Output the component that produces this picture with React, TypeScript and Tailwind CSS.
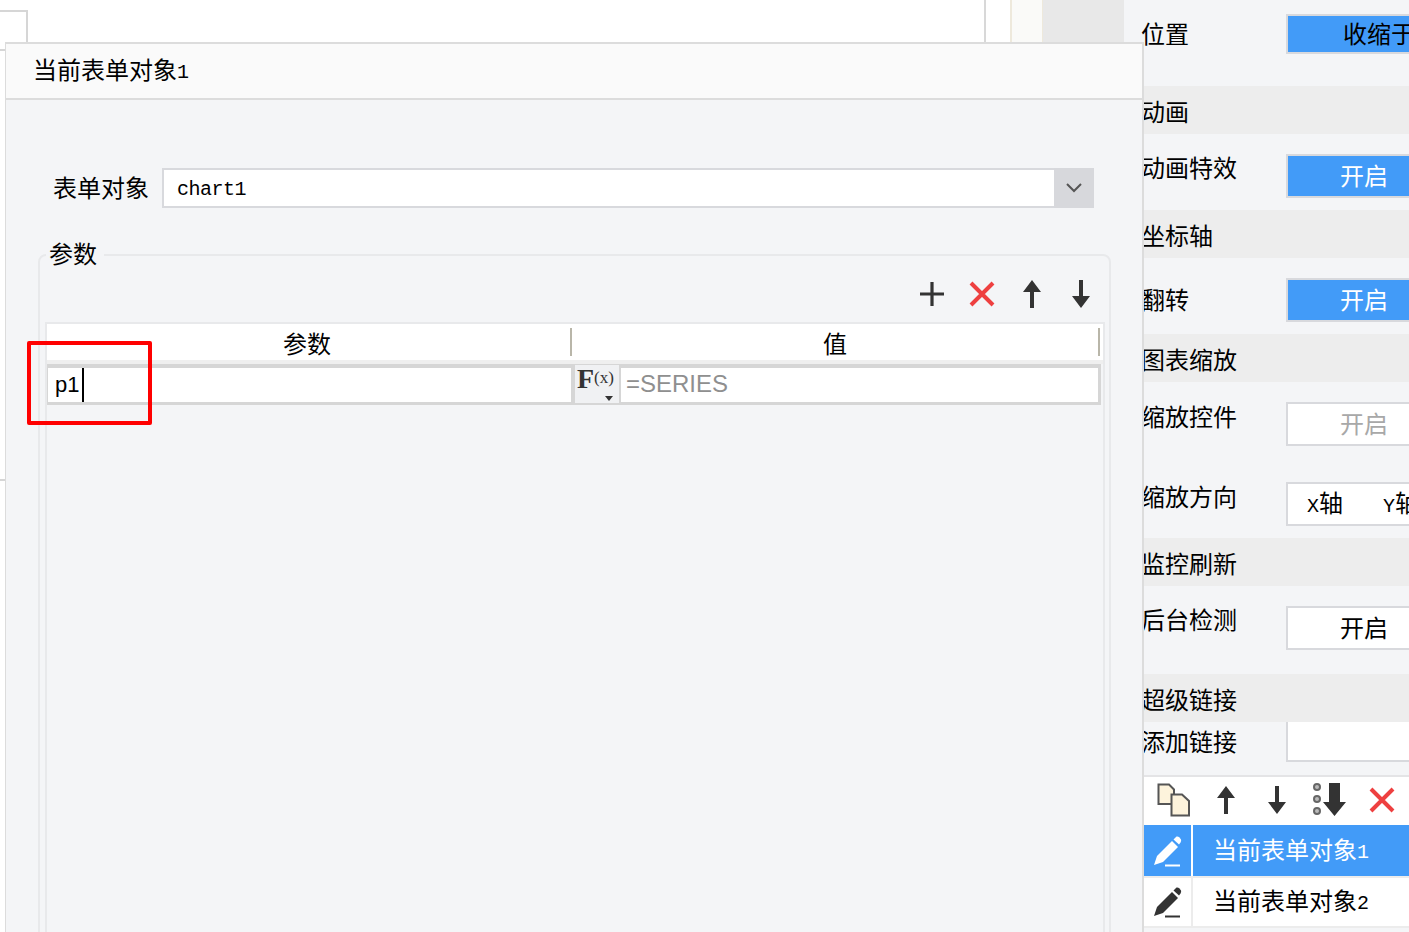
import React from 'react';

const Num = ({ children }: { children: React.ReactNode }) => <span className="text-[20px]">{children}</span>;

const ArrowUp = () => (
  <svg width="22" height="30" viewBox="0 0 22 30">
    <path d="M11 1 L20 13 L13 13 L13 29 L9 29 L9 13 L2 13 Z" fill="#333" />
  </svg>
);

const ArrowDown = () => (
  <svg width="22" height="30" viewBox="0 0 22 30">
    <path d="M9 1 L13 1 L13 17 L20 17 L11 29 L2 17 L9 17 Z" fill="#333" />
  </svg>
);

const Cross = () => (
  <svg width="28" height="28" viewBox="0 0 28 28">
    <path d="M3 3 L25 25 M25 3 L3 25" stroke="#ee4040" strokeWidth="4" fill="none" />
  </svg>
);

const Plus = () => (
  <svg width="26" height="26" viewBox="0 0 26 26">
    <path d="M1 13 L25 13 M13 1 L13 25" stroke="#333" strokeWidth="3.2" fill="none" />
  </svg>
);

const CopyIcon = () => (
  <svg width="34" height="34" viewBox="0 0 34 34">
    <path d="M1.5 1.5 H12 L17 6.5 V21 H1.5 Z" fill="#fdf3dc" stroke="#555" strokeWidth="2" />
    <path d="M14.5 11.5 H25 L32 18 V32.5 H14.5 Z" fill="#fdf3dc" stroke="#555" strokeWidth="2" />
  </svg>
);

const DottedDown = () => (
  <svg width="34" height="34" viewBox="0 0 34 34">
    <circle cx="4" cy="4" r="3" fill="#bbb" stroke="#666" strokeWidth="2" />
    <circle cx="4" cy="16" r="3" fill="#bbb" stroke="#666" strokeWidth="2" />
    <circle cx="4" cy="28" r="3" fill="#bbb" stroke="#666" strokeWidth="2" />
    <path d="M16 0 H27 V19 H33 L21.5 33 L10 19 H16 Z" fill="#333" />
  </svg>
);

const Pencil = ({ color }: { color: string }) => (
  <svg width="30" height="32" viewBox="0 0 30 32">
    <path d="M2 30 L5 21 L20 6 L26 12 L11 27 Z" fill={color} />
    <path d="M21.5 4.5 L24.5 1.5 Q26 1 27.5 2.5 L29 4.5 Q29.5 6 28.5 7.5 L27 9.5 Z" fill={color} />
    <path d="M13 30.5 H28" stroke={color} strokeWidth="2" />
  </svg>
);

const OptionButton = ({ tone, text, offset = 'pl-[52px]', height = 'h-[44px]' }: { tone: 'blue' | 'white' | 'muted'; text: string; offset?: string; height?: string }) => {
  const toneClass =
    tone === 'blue' ? 'bg-[#429bf8] text-white' : tone === 'muted' ? 'bg-white text-[#a8a8a8]' : 'bg-white text-black';
  return (
    <div className={`w-[160px] shrink-0 border-2 border-[#d8d9dd] flex items-center whitespace-nowrap pt-[6px] ${height} ${offset} ${toneClass}`}>
      {text}
    </div>
  );
};

const Section = ({ title }: { title: string }) => (
  <div className="h-[48px] bg-[#ededed] pl-[17px] pt-[10px] flex items-center">{title}</div>
);

const Row = ({ label, height, labelTop, btnTop, children }: { label: string; height: string; labelTop: string; btnTop: string; children: React.ReactNode }) => (
  <div className={`flex pl-[17px] ${height}`}>
    <div className={`w-[145px] shrink-0 leading-[32px] ${labelTop}`}>{label}</div>
    <div className={btnTop}>{children}</div>
  </div>
);

export default function App() {
  return (
    <div className="relative w-[1409px] h-[932px] overflow-hidden flex bg-white text-black text-[24px] font-['Liberation_Mono','Noto_Sans_CJK_SC',sans-serif]">
      {/* page behind the dialog */}
      <div className="w-[1124px] shrink-0 flex">
        <div className="w-[28px] shrink-0">
          <div className="mt-[10px] h-[41px] border-t-2 border-r-2 border-b-2 border-[#d6d6d6]" />
          <div className="h-[430px] border-b-2 border-[#d6d6d6]" />
        </div>
        <div className="w-[958px] shrink-0 border-r-2 border-[#d8d8d8]" />
        <div className="w-[26px] shrink-0 border-r-2 border-[#eee9dc]" />
        <div className="w-[31px] shrink-0 bg-[#fafaf8] border-r border-[#eee9dc]" />
        <div className="flex-1 bg-[#e8e8e8]" />
      </div>

      {/* property panel */}
      <div className="flex-1 min-w-0 overflow-hidden bg-[#f4f5f7]">
        <Row label="位置" height="h-[86px]" labelTop="mt-[21px]" btnTop="mt-[14px]">
          <OptionButton tone="blue" text="收缩于底部" offset="pl-[55px] !text-black" height="h-[40px]" />
        </Row>
        <Section title="动画" />
        <Row label="动画特效" height="h-[76px]" labelTop="mt-[21px]" btnTop="mt-[20px]">
          <OptionButton tone="blue" text="开启" />
        </Row>
        <Section title="坐标轴" />
        <Row label="翻转" height="h-[76px]" labelTop="mt-[29px]" btnTop="mt-[20px]">
          <OptionButton tone="blue" text="开启" />
        </Row>
        <Section title="图表缩放" />
        <Row label="缩放控件" height="h-[80px]" labelTop="mt-[22px]" btnTop="mt-[20px]">
          <OptionButton tone="muted" text="开启" />
        </Row>
        <Row label="缩放方向" height="h-[76px]" labelTop="mt-[22px]" btnTop="mt-[20px]">
          <div className="w-[160px] h-[44px] border-2 border-[#d8d9dd] bg-white flex items-center whitespace-nowrap pl-[19px] pt-[4px] gap-[40px]">
            <span><Num>X</Num>轴</span>
            <span><Num>Y</Num>轴</span>
          </div>
        </Row>
        <Section title="监控刷新" />
        <Row label="后台检测" height="h-[88px]" labelTop="mt-[21px]" btnTop="mt-[20px]">
          <OptionButton tone="white" text="开启" />
        </Row>
        <Section title="超级链接" />
        <Row label="添加链接" height="h-[53px]" labelTop="mt-[7px]" btnTop="mt-0">
          <div className="w-[160px] h-[40px] border-2 border-t-0 border-[#d8d9dd] bg-white" />
        </Row>
        <div className="h-[50px] pb-[3px] bg-white border-t-2 border-[#e4e4e6] flex items-center pl-[33px]">
          <div className="w-[34px] flex justify-center"><CopyIcon /></div>
          <div className="w-[34px] ml-[18px] flex justify-center"><ArrowUp /></div>
          <div className="w-[34px] ml-[17px] flex justify-center"><ArrowDown /></div>
          <div className="ml-[19px]"><DottedDown /></div>
          <div className="ml-[21px] flex"><Cross /></div>
        </div>
        <div className="h-[51px] flex bg-[#429bf8] text-white pl-[19px]">
          <div className="w-[50px] shrink-0 border-r-2 border-white flex items-center pl-[9px]"><Pencil color="#ffffff" /></div>
          <div className="flex items-center pl-[20px] pt-[4px] whitespace-nowrap">当前表单对象<Num>1</Num></div>
        </div>
        <div className="h-[52px] flex bg-white border-t-2 border-b-2 border-[#ececec] pl-[19px]">
          <div className="w-[50px] shrink-0 border-r-2 border-[#ececec] flex items-center pl-[9px]"><Pencil color="#333333" /></div>
          <div className="flex items-center pl-[20px] pt-[4px] whitespace-nowrap">当前表单对象<Num>2</Num></div>
        </div>
      </div>

      {/* dialog */}
      <div className="absolute left-[5px] top-[42px] w-[1139px] h-[890px] bg-[#f4f5f7] border-t-2 border-l border-r-2 border-[#dcdcdc]">
        <div className="h-[56px] bg-[#fafafa] border-b-2 border-[#dcdcdc] flex items-center pl-[27px] pt-[4px] whitespace-nowrap">
          当前表单对象<Num>1</Num>
        </div>

        <div className="flex items-center mt-[68px] ml-[47px] h-[40px]">
          <div className="w-[109px] shrink-0 pt-[6px]">表单对象</div>
          <div className="w-[932px] h-[40px] flex border-2 border-r-0 border-[#d8d9dd] bg-white">
            <div className="flex-1 pl-[13px] pt-[4px] flex items-center text-[20px] tracking-[-0.5px]">chart1</div>
            <div className="w-[40px] -my-[2px] bg-[#d7d8dc] flex items-center justify-center">
              <svg width="18" height="12" viewBox="0 0 18 12">
                <path d="M2 2 L9 9 L16 2" stroke="#555" strokeWidth="2" fill="none" />
              </svg>
            </div>
          </div>
        </div>

        <fieldset className="ml-[32px] mt-[29px] w-[1072px] h-[760px] border-2 border-[#e8e9eb] rounded-lg px-[4px]">
          <legend className="ml-[2px] pl-[3px] pr-[7px] pt-[4px] leading-[32px]">参数</legend>

          <div className="h-[42px] mb-[7px] flex items-center justify-end pr-[9px]">
            <div className="flex w-[30px] justify-center"><Plus /></div>
            <div className="flex w-[30px] ml-[20px] justify-center"><Cross /></div>
            <div className="flex w-[30px] ml-[20px] justify-center"><ArrowUp /></div>
            <div className="flex w-[30px] ml-[19px] justify-center"><ArrowDown /></div>
          </div>

          <div className="ml-[1px] w-[1060px] h-[700px] border-2 border-b-0 border-[#e8e9eb]">
            <div className="h-[36px] bg-white flex items-center">
              <div className="w-[525px] h-[28px] flex items-center justify-center pr-[3px] pt-[10px] border-r-2 border-[#b9b6a9]">参数</div>
              <div className="w-[528px] h-[28px] flex items-center justify-center pt-[10px] border-r-2 border-[#b9b6a9]">值</div>
            </div>
            <div className="h-[4px] bg-[#efefef]" />
            <div className="h-[41px] flex bg-[#d6d6d6] pt-[4px] pb-[3px] pl-[1px] pr-[3px] w-[1054px]">
              <div className="w-[523px] bg-white flex items-center pl-[7px] pb-[2px] font-['Liberation_Sans',sans-serif] text-[22px]">
                p1
                <div className="w-[2px] h-[34px] -mb-[2px] bg-black ml-[3px]" />
              </div>
              <div className="relative w-[44px] ml-[4px] -mt-[3px] -mb-[1px] bg-[#f0f1f3] font-['Liberation_Serif',serif] leading-none">
                <div className="flex items-start pl-[2px] pt-[1px] text-[#333]">
                  <span className="text-[28px] font-bold leading-[26px]">F</span>
                  <span className="text-[17px] leading-[24px]">(x)</span>
                </div>
                <div className="absolute right-[6px] bottom-[2px] w-0 h-0 border-x-[4px] border-x-transparent border-t-[5px] border-t-[#333]" />
              </div>
              <div className="ml-[2px] flex-1 bg-white flex items-center pl-[5px] pb-[2px] font-['Liberation_Sans',sans-serif] text-[24px] text-[#8f8f8f]">
                =SERIES
              </div>
            </div>
          </div>
        </fieldset>
      </div>

      {/* red annotation */}
      <div className="absolute left-[27px] top-[341px] w-[125px] h-[84px] border-[4px] border-[#ff0000] rounded-[2px]" />
    </div>
  );
}
